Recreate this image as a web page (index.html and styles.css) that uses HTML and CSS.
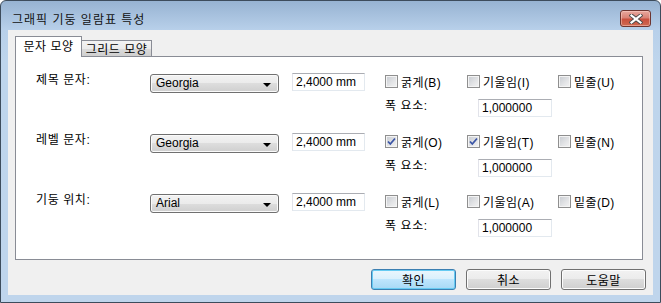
FILE: index.html
```html
<!DOCTYPE html>
<html lang="ko">
<head>
<meta charset="utf-8">
<title>그래픽 기둥 일람표 특성</title>
<link rel="stylesheet" href="styles.css">
</head>
<body>
<div class="window">
  <div class="titlebar">
    <span class="title">그래픽 기둥 일람표 특성</span>
    <div class="close">
      <svg width="14" height="10" viewBox="0 0 14 10">
        <path d="M2.5 1.5 L11.5 8.5 M11.5 1.5 L2.5 8.5" stroke="#4a4a4a" stroke-width="4" stroke-linecap="square"/>
        <path d="M2.5 1.5 L11.5 8.5 M11.5 1.5 L2.5 8.5" stroke="#ffffff" stroke-width="2.2" stroke-linecap="square"/>
      </svg>
    </div>
  </div>
  <div class="client">
    <div class="tabs">
      <div class="tab active">문자 모양</div>
      <div class="tab">그리드 모양</div>
    </div>
    <div class="panel">
      <div class="group">
        <div class="label">제목 문자:</div>
        <div class="combo"><span>Georgia</span><span class="arrow"></span></div>
        <div class="edit size">2,4000 mm</div>
        <div class="check"><span class="box"></span>굵게(B)</div>
        <div class="check"><span class="box"></span>기울임(I)</div>
        <div class="check"><span class="box"></span>밑줄(U)</div>
        <div class="factor"><span class="flabel">폭 요소:</span><div class="edit num">1,000000</div></div>
      </div>
      <div class="group">
        <div class="label">레벨 문자:</div>
        <div class="combo"><span>Georgia</span><span class="arrow"></span></div>
        <div class="edit size">2,4000 mm</div>
        <div class="check"><span class="box"><svg width="11" height="11" viewBox="0 0 11 11"><path d="M2 5.5 L4.3 8 L9 2.5" fill="none" stroke="#3b55a6" stroke-width="1.8"/></svg></span>굵게(O)</div>
        <div class="check"><span class="box"><svg width="11" height="11" viewBox="0 0 11 11"><path d="M2 5.5 L4.3 8 L9 2.5" fill="none" stroke="#3b55a6" stroke-width="1.8"/></svg></span>기울임(T)</div>
        <div class="check"><span class="box"></span>밑줄(N)</div>
        <div class="factor"><span class="flabel">폭 요소:</span><div class="edit num">1,000000</div></div>
      </div>
      <div class="group">
        <div class="label">기둥 위치:</div>
        <div class="combo"><span>Arial</span><span class="arrow"></span></div>
        <div class="edit size">2,4000 mm</div>
        <div class="check"><span class="box"></span>굵게(L)</div>
        <div class="check"><span class="box"></span>기울임(A)</div>
        <div class="check"><span class="box"></span>밑줄(D)</div>
        <div class="factor"><span class="flabel">폭 요소:</span><div class="edit num">1,000000</div></div>
      </div>
    </div>
    <div class="buttons">
      <div class="btn default">확인</div>
      <div class="btn">취소</div>
      <div class="btn">도움말</div>
    </div>
  </div>
</div>
</body>
</html>
```
FILE: styles.css
```css
html, body {
  margin: 0;
  padding: 0;
  background: #ffffff;
}
body {
  font-family: "Liberation Sans", "Noto Sans CJK KR", sans-serif;
  font-size: 12px;
  color: #000;
}
.window {
  width: 661px;
  height: 303px;
  box-sizing: border-box;
  border: 1px solid #3d4c5c;
  border-radius: 6px 6px 0 0;
  background: linear-gradient(to bottom, #97b3d2 0px, #b8d0ea 29px, #bed5ec 60px, #bfd5ec 100%);
  display: flex;
  flex-direction: column;
  overflow: hidden;
}
.titlebar {
  height: 29px;
  flex: none;
  display: flex;
  justify-content: space-between;
  align-items: flex-start;
  padding: 0 9px 0 11px;
}
.title {
  margin-top: 12px;
  line-height: 14px;
  font-size: 12px;
  letter-spacing: 1px;
  color: #111;
}
.close {
  margin-top: 9px;
  width: 31px;
  height: 17px;
  box-sizing: border-box;
  border: 1px solid #6d3530;
  border-radius: 3px;
  background: linear-gradient(to bottom, #e8a89e 0%, #d98376 45%, #c9503e 55%, #cf6a52 100%);
  box-shadow: inset 0 0 0 1px rgba(255, 220, 210, 0.45);
  display: flex;
  align-items: center;
  justify-content: center;
}
.client {
  flex: 1;
  margin: 0 7px 7px 7px;
  background: #f0f0f0;
  padding: 6px 7px 0 7px;
  box-sizing: border-box;
}
.tabs {
  display: flex;
  align-items: flex-end;
  height: 20px;
}
.tab {
  box-sizing: border-box;
  border: 1px solid #898c95;
  border-bottom: none;
  text-align: center;
  font-family: "Noto Sans CJK KR", sans-serif;
  letter-spacing: 0.5px;
}
.tab.active {
  width: 67px;
  height: 21px;
  margin-bottom: -1px;
  background: #ffffff;
  line-height: 18px;
  position: relative;
  z-index: 1;
}
.tab:not(.active) {
  width: 71px;
  height: 16px;
  margin-left: -1px;
  line-height: 15px;
  background: linear-gradient(to bottom, #f3f3f3 0%, #ebebeb 50%, #dcdcdc 50%, #cfcfcf 100%);
}
.panel {
  width: 628px;
  height: 204px;
  box-sizing: border-box;
  border: 1px solid #898c95;
  background: #ffffff;
  padding: 16px 0 0 20px;
}
.group {
  display: grid;
  grid-template-columns: 114px 142px 93px 82px 91px 1fr;
  grid-template-rows: 19px 18px;
  row-gap: 7px;
  height: 60px;
  align-items: start;
}
.label {
  line-height: 14px;
  letter-spacing: 0.6px;
}
.combo {
  margin-top: 1px;
  width: 129px;
  height: 19px;
  box-sizing: border-box;
  border: 1px solid #707070;
  border-radius: 3px;
  background: linear-gradient(to bottom, #f2f2f2 0%, #ebebeb 50%, #dddddd 50%, #cfcfcf 100%);
  box-shadow: inset 0 0 0 1px #fafafa;
  display: flex;
  align-items: center;
  justify-content: space-between;
  padding: 0 7px 0 5px;
  line-height: 17px;
}
.arrow {
  width: 0;
  height: 0;
  border-left: 4px solid transparent;
  border-right: 4px solid transparent;
  border-top: 4px solid #000;
  margin-top: 2px;
}
.edit {
  box-sizing: border-box;
  height: 18px;
  border: 1px solid;
  border-color: #abadb3 #e3e9ef #e3e9ef #e2e3ea;
  background: #ffffff;
  line-height: 16px;
  padding-left: 3px;
}
.size {
  width: 73px;
}
.num {
  width: 74px;
}
.check {
  display: flex;
  align-items: center;
  gap: 3px;
  height: 15px;
  margin-top: 1px;
  white-space: nowrap;
  letter-spacing: 0.4px;
}
.box {
  width: 13px;
  height: 13px;
  box-sizing: border-box;
  border: 1px solid #8f8f8f;
  background: linear-gradient(135deg, #c6cad0 0%, #e4e5e7 60%, #f3f3f3 100%);
  box-shadow: inset 0 0 0 1px #f4f4f4;
  display: flex;
  align-items: center;
  justify-content: center;
  flex: none;
}
.factor {
  grid-column: 4 / 7;
  display: flex;
  align-items: flex-start;
}
.flabel {
  width: 93px;
  line-height: 14px;
  letter-spacing: 0.6px;
}
.buttons {
  display: flex;
  justify-content: flex-end;
  gap: 10px;
  margin-top: 9px;
}
.btn {
  width: 85px;
  height: 21px;
  box-sizing: border-box;
  border: 1px solid #707070;
  border-radius: 3px;
  background: linear-gradient(to bottom, #f2f2f2 0%, #ebebeb 50%, #dddddd 50%, #cfcfcf 100%);
  box-shadow: inset 0 0 0 1px #fcfcfc;
  text-align: center;
  line-height: 19px;
  font-family: "Noto Sans CJK KR", sans-serif;
  letter-spacing: 0.5px;
}
.btn.default {
  border-color: #3c7fb1;
  background: linear-gradient(to bottom, #eaf6fd 0%, #d9f0fc 50%, #bee6fd 50%, #a7d9f5 100%);
  box-shadow: inset 0 0 0 1px #66cbf2;
}
```
